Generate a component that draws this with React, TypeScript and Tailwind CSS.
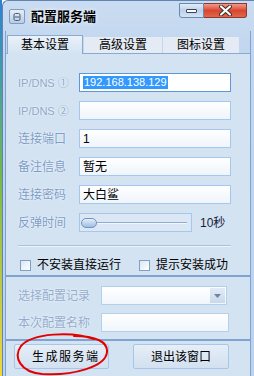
import React from "react";

const labelCls =
  "w-[61px] shrink-0 text-[12px] leading-[14px] text-[#7d9dc7] [text-shadow:0_0_2px_#ffffff]";
const boxCls =
  "h-[19px] border border-[#a6c7ec] bg-linear-to-b from-white to-[#eef5fc] flex items-center pl-[3px] text-[12px] leading-[14px] text-black";

const fields = [
  { label: "IP/DNS ②", value: "", small: true },
  { label: "连接端口", value: "1" },
  { label: "备注信息", value: "暂无" },
  { label: "连接密码", value: "大白鲨" },
];

function Checkbox({ label }: { label: string }) {
  return (
    <div className="flex items-center gap-[6px]">
      <div className="w-[11px] h-[11px] border border-[#7f9fc6] bg-linear-to-br from-[#dde7f2] to-white" />
      <span className="text-[12px] leading-[14px] text-black">{label}</span>
    </div>
  );
}

export default function App() {
  return (
    <div className="relative flex w-[254px] h-[376px] overflow-hidden font-['Liberation_Sans','Noto_Sans_CJK_SC',sans-serif]">
      {/* desktop behind the window */}
      <div className="w-[2px] shrink-0 bg-linear-to-b from-[#2f7fd6] via-[#6fb84a] via-45% to-[#f2d83a]" />

      <div className="flex-1 flex flex-col rounded-tl-[6px] border-l border-t border-[#6484b0] bg-linear-to-b from-[#cadcf1] via-[#c0d6ef] via-15% to-[#bcd3ee]">
        {/* title bar */}
        <div className="h-[30px] shrink-0 flex items-start">
          <div className="ml-[6px] mt-[8px] w-[16px] h-[15px] rounded-[2px] border border-[#7f9cc0] bg-linear-to-b from-[#e6eef8] to-[#b7cce6] flex items-center justify-center">
            <svg width="8" height="8" viewBox="0 0 8 8">
              <rect x="1" y="0.5" width="6" height="7" rx="1.5" fill="none" stroke="#4a5a70" strokeWidth="1" />
              <line x1="1.5" y1="4" x2="6.5" y2="4" stroke="#4a5a70" strokeWidth="1" />
            </svg>
          </div>
          <div className="ml-[6px] mt-[8px] text-[13px] leading-[16px] font-bold text-black [text-shadow:0_0_4px_#ffffff]">
            配置服务端
          </div>
          <div className="flex-1" />
          <div className="mt-[2px] mr-[7px] flex">
            <div className="w-[25px] h-[15px] rounded-bl-[3px] border border-[#6a88b0] bg-linear-to-b from-[#e3ecf7] via-[#bcd0ea] to-[#d5e3f4] flex items-center justify-center">
              <div className="w-[11px] h-[4px] rounded-[1px] border border-[#34465e] bg-white" />
            </div>
            <div className="w-[43px] h-[15px] rounded-br-[3px] border border-l-0 border-[#8a3a30] bg-linear-to-b from-[#ee9a8a] via-[#d9452e] to-[#e0674a] flex items-center justify-center">
              <svg width="13" height="11" viewBox="0 0 13 11">
                <path d="M2 1.5 L11 9.5 M11 1.5 L2 9.5" stroke="#3a2a2a" strokeWidth="4" strokeLinecap="round" />
                <path d="M2 1.5 L11 9.5 M11 1.5 L2 9.5" stroke="#ffffff" strokeWidth="2.2" strokeLinecap="round" />
              </svg>
            </div>
          </div>
        </div>

        {/* client area */}
        <div className="flex-1 flex flex-col ml-[2px] mr-[3px] border-x border-[#7ea3cf]">
          {/* tabs */}
          <div className="h-[22px] shrink-0 flex items-end pl-[1px] text-[12px] leading-[14px] text-black">
            <div className="relative z-10 -mb-px w-[76px] h-[19px] border border-b-0 border-[#8aaad2] bg-linear-to-b from-[#eaf1f9] to-[#d4e3f2] flex items-center justify-center">
              基本设置
            </div>
            <div className="ml-[1px] w-[78px] h-[16px] bg-[#e4ebf4] flex items-center justify-center">
              高级设置
            </div>
            <div className="ml-[1px] w-[76px] h-[16px] bg-[#e4ebf4] flex items-center justify-center">
              图标设置
            </div>
          </div>

          {/* tab panel */}
          <div className="h-[222px] shrink-0 border-t border-[#8aaad2] bg-[#d4e3f2] pt-[19px] pl-[12px] flex flex-col">
            <div className="flex flex-col gap-[9px]">
              <div className="flex items-center">
                <span className="w-[61px] shrink-0 text-[11px] leading-[14px] text-[#8ea8c9] [text-shadow:0_0_2px_#ffffff]">
                  IP/DNS ①
                </span>
                <div className="w-[152px] h-[19px] border border-[#5d97d6] bg-white flex items-center pl-[3px]">
                  <span className="bg-[#3399ff] text-white text-[11px] leading-[13px] px-[1px]">
                    192.168.138.129
                  </span>
                </div>
              </div>
              {fields.map((f) => (
                <div key={f.label} className="flex items-center">
                  <span
                    className={
                      f.small
                        ? "w-[61px] shrink-0 text-[11px] leading-[14px] text-[#8ea8c9] [text-shadow:0_0_2px_#ffffff]"
                        : labelCls
                    }
                  >
                    {f.label}
                  </span>
                  <div className={"w-[152px] " + boxCls}>{f.value}</div>
                </div>
              ))}
              <div className="flex items-center">
                <span className={labelCls}>反弹时间</span>
                <div className="w-[113px] h-[19px] border border-[#a6c7ec] bg-[#dbe7f5] flex items-center pl-[1px] pr-[4px]">
                  <div className="w-[16px] h-[10px] shrink-0 rounded-full border border-[#6f94c0] bg-linear-to-b from-[#e4eef9] to-[#9fbde0]" />
                  <div className="flex-1 flex flex-col">
                    <div className="h-px bg-[#8fadd3]" />
                    <div className="h-px bg-[#f2f7fc]" />
                  </div>
                </div>
                <span className="ml-[8px] text-[12px] leading-[14px] text-[#1a1a3a]">10秒</span>
              </div>
            </div>
            <div className="mt-[13px] mr-[19px] flex flex-col">
              <div className="h-px bg-[#a8c1de]" />
              <div className="h-px bg-[#eef4fb]" />
            </div>
            <div className="mt-[11px] pl-[2px] flex items-center gap-[9px]">
              <div className="w-[110px]">
                <Checkbox label="不安装直接运行" />
              </div>
              <Checkbox label="提示安装成功" />
            </div>
          </div>

          <div className="h-[2px] shrink-0 bg-[#7ea4d0]" />

          {/* record section */}
          <div className="h-[62px] shrink-0 bg-[#d4e3f2] pt-[9px] pl-[12px] flex flex-col gap-[8px]">
            <div className="flex items-center">
              <span className="w-[83px] shrink-0 text-[12px] leading-[14px] text-[#92acce] [text-shadow:0_0_2px_#ffffff]">
                选择配置记录
              </span>
              <div className="w-[126px] h-[19px] border border-[#b3cfee] bg-linear-to-b from-white to-[#f0f6fc] flex items-center justify-end pr-[1px]">
                <div className="w-[15px] h-[15px] bg-linear-to-b from-[#e2ebf5] to-[#c9d9ea] flex items-center justify-center">
                  <svg width="7" height="4" viewBox="0 0 7 4">
                    <path d="M0 0 L7 0 L3.5 4 Z" fill="#6a85a6" />
                  </svg>
                </div>
              </div>
            </div>
            <div className="flex items-center">
              <span className="w-[83px] shrink-0 text-[12px] leading-[14px] text-[#92acce] [text-shadow:0_0_2px_#ffffff]">
                本次配置名称
              </span>
              <div className="w-[128px] h-[19px] border border-[#b3cfee] bg-linear-to-b from-white to-[#f0f6fc]" />
            </div>
          </div>

          <div className="h-[2px] shrink-0 bg-[#7ea4d0]" />

          {/* buttons */}
          <div className="flex-1 bg-[#d4e3f2] pt-[3px] pl-[8px] flex items-start gap-[24px]">
            <button className="w-[95px] h-[25px] rounded-[2px] border border-[#a8c6ea] bg-linear-to-b from-[#e6eef7] to-[#d2e0f0] text-left pl-[17px] text-[12px] leading-[14px] tracking-[1.5px] text-black">
              生成服务端
            </button>
            <button className="w-[96px] h-[25px] rounded-[2px] border border-[#a8c6ea] bg-linear-to-b from-[#e6eef7] to-[#d2e0f0] text-[12px] leading-[14px] text-black">
              退出该窗口
            </button>
          </div>
        </div>
      </div>

      {/* red hand-drawn mark */}
      <svg className="absolute left-0 top-0 pointer-events-none" width="254" height="376" viewBox="0 0 254 376">
        <path
          d="M94 339 C72 331 32 333 21 346 C13 357 20 372 42 374 C72 376 106 367 107 352 C108 342 96 336 74 336"
          fill="none"
          stroke="#e30000"
          strokeWidth="2"
          strokeLinecap="round"
        />
      </svg>
    </div>
  );
}
